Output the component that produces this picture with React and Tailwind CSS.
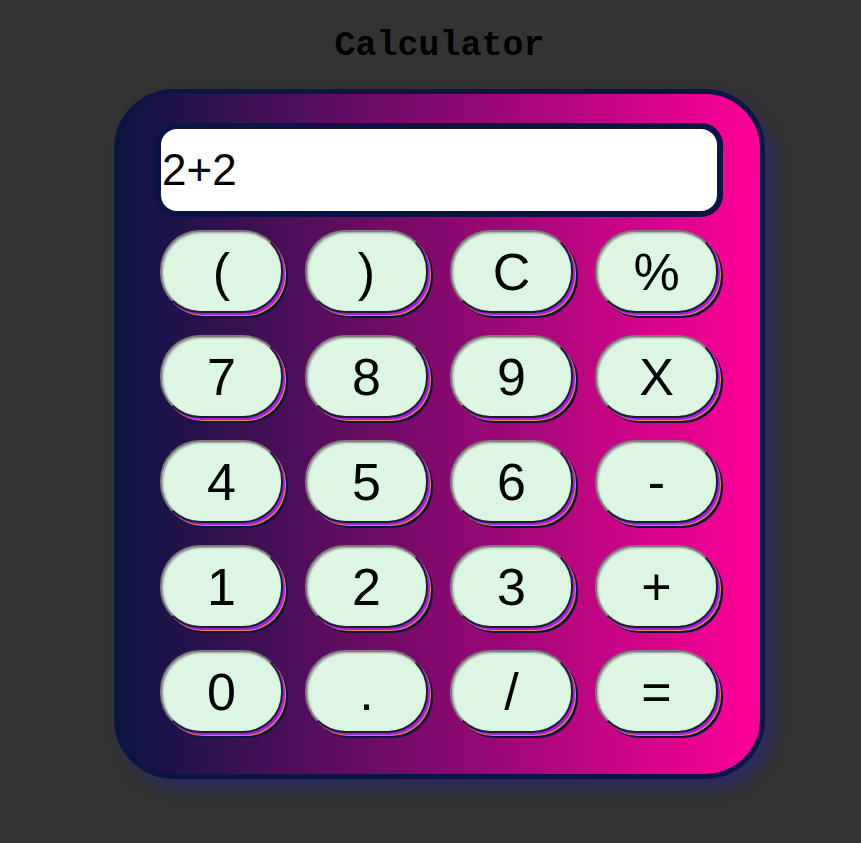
const keys = ['(', ')', 'C', '%', '7', '8', '9', 'X', '4', '5', '6', '-', '1', '2', '3', '+', '0', '.', '/', '='];

export default function App() {
  return (
    <div className="min-h-screen bg-[#333333] pl-[18px]">
      <div className="flex flex-col items-center pt-[26px] pb-10">
        {/* Title */}
        <h1 className="text-[35px] leading-[40px] font-bold text-black font-['Liberation_Mono',monospace]">
          Calculator
        </h1>

        {/* Body */}
        <div className="mt-[23px] w-[651px] rounded-[60px] border-[5px] border-[#0c1442] bg-[linear-gradient(to_right,#0b1442,#ff0099)] px-[36px] pt-[29px] pb-[41px] shadow-[8px_10px_14px_#2b2b62]">
          <div className="flex h-[94px] w-[568px] items-center rounded-[22px] border-[6px] border-[#0c1442] bg-white pl-[1px] text-[44px] text-black font-['Liberation_Sans',Arial,sans-serif]">
            2+2
          </div>

          <div className="mt-[13px] grid grid-cols-[repeat(4,123px)] auto-rows-[83px] gap-x-[22px] gap-y-[22px] px-[5px]">
            {keys.map((k) => (
              <button
                key={k}
                className="flex items-center justify-center rounded-[40px] border-2 border-t-[#7c7c7c] border-l-[#7c7c7c] border-b-[#1e1e2a] border-r-[#1e1e2a] bg-[#ddf5e3] text-[52px] leading-none text-black font-['Liberation_Sans',Arial,sans-serif] shadow-[inset_1px_1px_2px_#9a9a9a,2px_2px_0_#a21df2,3px_3px_0_#f08a30,5px_5px_0_#0d1440]"
              >
                {k}
              </button>
            ))}
          </div>
        </div>
      </div>
    </div>
  );
}
